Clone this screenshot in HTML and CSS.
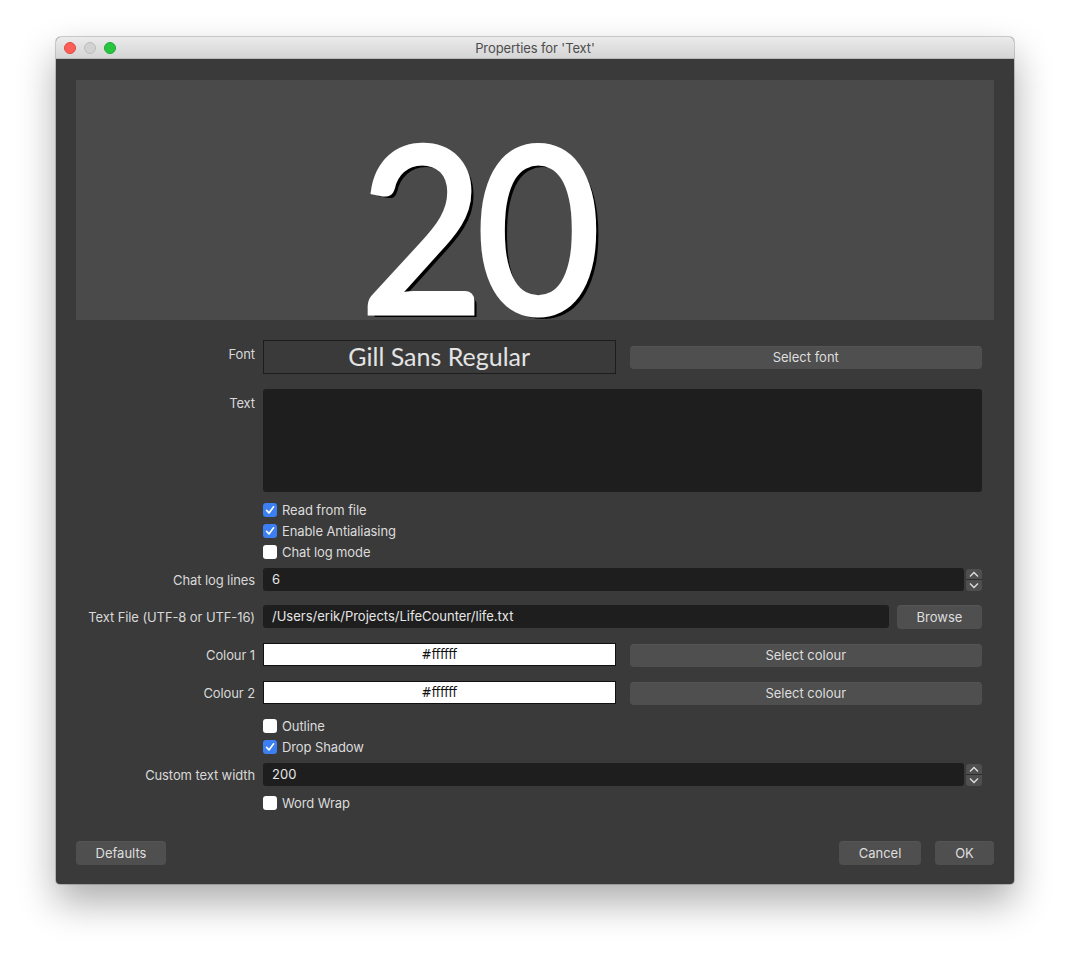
FILE: index.html
```html
<!DOCTYPE html>
<html>
<head>
<meta charset="utf-8">
<title>Properties for 'Text'</title>
<link rel="stylesheet" href="styles.css">
</head>
<body>
<div class="window">
  <div class="titlebar">
    <div class="lights">
      <span class="light red"></span>
      <span class="light grey"></span>
      <span class="light green"></span>
    </div>
    <div class="title">Properties for 'Text'</div>
  </div>
  <div class="content">
    <div class="preview"><span class="big">20</span></div>
    <div class="form">
      <div class="row row-font">
        <div class="lbl top">Font</div>
        <div class="split">
          <div class="fontbox">Gill Sans Regular</div>
          <div class="btn btn-mid">Select font</div>
        </div>
      </div>
      <div class="row row-text">
        <div class="lbl top">Text</div>
        <div class="textarea"></div>
      </div>
      <div class="checks checks-1">
        <div class="row check-row"><div></div><div class="check"><span class="box on"><svg viewBox="0 0 14 14"><path d="M3.6 7.4 L6 9.9 L10.6 3.8"/></svg></span>Read from file</div></div>
        <div class="row check-row"><div></div><div class="check"><span class="box on"><svg viewBox="0 0 14 14"><path d="M3.6 7.4 L6 9.9 L10.6 3.8"/></svg></span>Enable Antialiasing</div></div>
        <div class="row check-row"><div></div><div class="check"><span class="box"></span>Chat log mode</div></div>
      </div>
      <div class="row row-spin r-chat">
        <div class="lbl">Chat log lines</div>
        <div class="spin">
          <div class="input">6</div>
          <div class="arrows">
            <div class="arrow"><svg viewBox="0 0 16 11"><path d="M4 7.5 L8 3.5 L12 7.5"/></svg></div>
            <div class="arrow"><svg viewBox="0 0 16 11"><path d="M4 3.5 L8 7.5 L12 3.5"/></svg></div>
          </div>
        </div>
      </div>
      <div class="row row-file">
        <div class="lbl">Text File (UTF-8 or UTF-16)</div>
        <div class="filefield">
          <div class="input">/Users/erik/Projects/LifeCounter/life.txt</div>
          <div class="btn">Browse</div>
        </div>
      </div>
      <div class="row row-colour">
        <div class="lbl">Colour 1</div>
        <div class="split">
          <div class="colourbox">#ffffff</div>
          <div class="btn btn-low">Select colour</div>
        </div>
      </div>
      <div class="row row-colour">
        <div class="lbl">Colour 2</div>
        <div class="split">
          <div class="colourbox">#ffffff</div>
          <div class="btn btn-low">Select colour</div>
        </div>
      </div>
      <div class="checks checks-2">
        <div class="row check-row"><div></div><div class="check"><span class="box"></span>Outline</div></div>
        <div class="row check-row"><div></div><div class="check"><span class="box on"><svg viewBox="0 0 14 14"><path d="M3.6 7.4 L6 9.9 L10.6 3.8"/></svg></span>Drop Shadow</div></div>
      </div>
      <div class="row row-spin r-width">
        <div class="lbl">Custom text width</div>
        <div class="spin">
          <div class="input">200</div>
          <div class="arrows">
            <div class="arrow"><svg viewBox="0 0 16 11"><path d="M4 7.5 L8 3.5 L12 7.5"/></svg></div>
            <div class="arrow"><svg viewBox="0 0 16 11"><path d="M4 3.5 L8 7.5 L12 3.5"/></svg></div>
          </div>
        </div>
      </div>
      <div class="checks checks-3">
        <div class="row check-row"><div></div><div class="check"><span class="box"></span>Word Wrap</div></div>
      </div>
    </div>
    <div class="footer">
      <div class="btn btn-defaults">Defaults</div>
      <div class="footer-right">
        <div class="btn btn-cancel">Cancel</div>
        <div class="btn btn-ok">OK</div>
      </div>
    </div>
  </div>
</div>
</body>
</html>
```

FILE: styles.css
```css
* { box-sizing: border-box; }
html, body { margin: 0; padding: 0; }
body {
  background: #ffffff;
  width: 1070px;
  height: 959px;
  overflow: hidden;
  font-family: Inter, "Liberation Sans", sans-serif;
  font-size: 13px;
}
.window {
  margin: 37px 0 0 56px;
  width: 958px;
  height: 847px;
  border-radius: 5px 5px 4px 4px;
  background: #3a3a3a;
  box-shadow: 0 18px 38px rgba(0,0,0,0.33), 0 0 0 1px rgba(0,0,0,0.18);
  overflow: hidden;
}
.titlebar {
  height: 22px;
  background: linear-gradient(#ebebeb, #d5d5d5);
  border-bottom: 1px solid #b8b8b8;
  display: flex;
  align-items: center;
  position: relative;
}
.lights {
  display: flex;
  gap: 8px;
  padding-left: 8px;
}
.light {
  width: 12px;
  height: 12px;
  border-radius: 50%;
  display: block;
}
.red { background: #fc5f57; border: 0.5px solid #df4a43; }
.grey { background: #d2d2d2; border: 0.5px solid #bdbdbd; }
.green { background: #29c540; border: 0.5px solid #1ea92f; }
.title {
  position: absolute;
  left: 0; right: 0; top: 0;
  line-height: 22px;
  text-align: center;
  color: #4d4d4d;
  font-size: 13px;
  letter-spacing: -0.1px;
}
.content {
  padding: 21px 20px 19px 20px;
  display: flex;
  flex-direction: column;
}
.preview {
  height: 240px;
  background: #4a4a4a;
  overflow: hidden;
  padding-left: 284px;
}
.big {
  display: inline-block;
  font-family: Lato, "Open Sans", sans-serif;
  font-weight: 400;
  font-size: 232px;
  line-height: 180px;
  height: 180px;
  color: #ffffff;
  -webkit-text-stroke: 5px #ffffff;
  text-shadow: 5px 4px 0 #000000;
  transform: scaleX(0.92);
  transform-origin: left top;
  letter-spacing: -8px;
  margin-top: 53px;
}
.form {
  margin-right: 12px;
  display: flex;
  flex-direction: column;
}
.row {
  display: grid;
  grid-template-columns: 179px 1fr;
  column-gap: 8px;
  align-items: center;
}
.lbl {
  text-align: right;
  color: #d8d8d8;
  white-space: nowrap;
  letter-spacing: -0.1px;
}
.lbl.top { align-self: start; padding-top: 6px; }
.row-font { margin-top: 20px; height: 34px; }
.split {
  display: grid;
  grid-template-columns: 1fr 1fr;
  column-gap: 14px;
  align-items: center;
}
.fontbox {
  height: 34px;
  border: 1px solid #1c1c1c;
  background: #3a3a3a;
  color: #e4e4e4;
  font-family: Lato, "Open Sans", sans-serif;
  font-size: 25px;
  line-height: 31px;
  text-align: center;
  overflow: hidden;
}
.btn {
  height: 24px;
  background: #4f4f4f;
  border-radius: 4px;
  color: #dedede;
  text-align: center;
  line-height: 24px;
  box-shadow: inset 0 1px 0 rgba(255,255,255,0.04);
}
.btn-mid { height: 23px; line-height: 23px; }
.btn-low { margin-top: 1px; height: 23px; line-height: 23px; }
.row-text { margin-top: 15px; }
.textarea {
  height: 103px;
  background: #1e1e1e;
  border-radius: 3px;
}
.checks { display: flex; flex-direction: column; }
.checks-1 { margin-top: 7px; }
.checks-2 { margin-top: 10px; }
.checks-3 { margin-top: 6px; }
.check-row { height: 21px; }
.check {
  display: flex;
  align-items: center;
  gap: 5px;
  color: #dcdcdc;
  letter-spacing: -0.1px;
}
.box {
  width: 14px;
  height: 14px;
  border-radius: 3px;
  background: #ffffff;
  display: block;
  flex: none;
}
.box.on { background: #3b7ff2; }
.box svg { width: 14px; height: 14px; display: block; }
.box svg path { fill: none; stroke: #ffffff; stroke-width: 1.6; stroke-linecap: round; stroke-linejoin: round; }
.row-spin { height: 23px; }
.r-chat { margin-top: 6px; }
.r-width { margin-top: 6px; }
.spin {
  display: flex;
  gap: 2px;
  height: 23px;
}
.input {
  flex: 1;
  height: 23px;
  background: #1e1e1e;
  border-radius: 3px;
  color: #e6e6e6;
  line-height: 23px;
  padding-left: 9px;
}
.arrows {
  width: 16px;
  margin-top: 1px;
  height: 22px;
  background: #4f4f4f;
  border-radius: 3px;
  display: flex;
  flex-direction: column;
}
.arrow { height: 11px; }
.arrow:first-child { border-bottom: 1px solid #2e2e2e; }
.arrow svg { width: 16px; height: 11px; display: block; }
.arrow svg path { fill: none; stroke: #e0e0e0; stroke-width: 1.3; }
.row-file { margin-top: 14px; height: 24px; }
.filefield {
  display: flex;
  gap: 8px;
  align-items: start;
}
.filefield .btn { width: 85px; }
.row-colour { margin-top: 14px; height: 24px; }
.colourbox {
  height: 23px;
  background: #ffffff;
  border: 1px solid #111111;
  color: #111111;
  font-family: "DejaVu Sans Condensed", "DejaVu Sans", sans-serif;
  font-size: 13.5px;
  line-height: 21px;
  text-align: center;
  align-self: start;
}
.footer {
  margin-top: 28px;
  display: flex;
  justify-content: space-between;
}
.footer-right { display: flex; gap: 14px; }
.btn-defaults { width: 90px; }
.btn-cancel { width: 82px; }
.btn-ok { width: 59px; }
```
